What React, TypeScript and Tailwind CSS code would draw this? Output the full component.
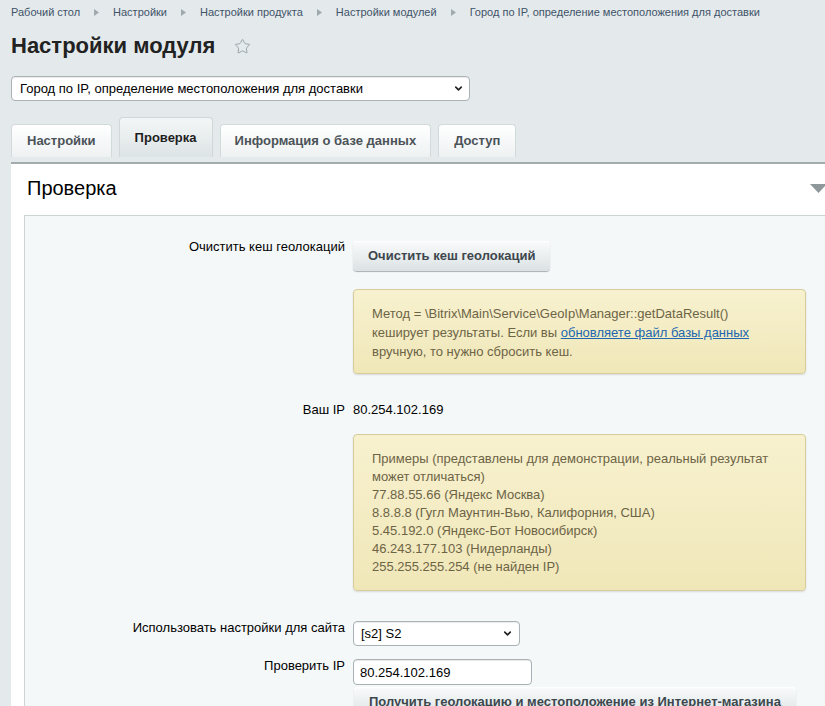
import React from "react";
import { Star, ChevronDown } from "lucide-react";

const crumbs = [
  "Рабочий стол",
  "Настройки",
  "Настройки продукта",
  "Настройки модулей",
  "Город по IP, определение местоположения для доставки",
];

const tabs = [
  { name: "Настройки", active: false, pad: "px-[15px]" },
  { name: "Проверка", active: true, pad: "px-[15px]" },
  { name: "Информация о базе данных", active: false, pad: "px-[14px]" },
  { name: "Доступ", active: false, pad: "px-[15px]" },
];

const examples = [
  "77.88.55.66 (Яндекс Москва)",
  "8.8.8.8 (Гугл Маунтин-Вью, Калифорния, США)",
  "5.45.192.0 (Яндекс-Бот Новосибирск)",
  "46.243.177.103 (Нидерланды)",
  "255.255.255.254 (не найден IP)",
];

const Row: React.FC<{ label?: string; className?: string; children: React.ReactNode }> = ({
  label,
  className = "",
  children,
}) => (
  <div className={`flex items-start ${className}`}>
    <div className="w-[320px] shrink-0 text-right text-[13px] leading-[16px] text-black">{label}</div>
    <div className="ml-[8px] flex-1">{children}</div>
  </div>
);

const AdmButton: React.FC<{ children: React.ReactNode; className?: string }> = ({ children, className = "" }) => (
  <button
    className={`h-[30px] rounded-[4px] bg-gradient-to-b from-[#fafbfb] to-[#dbe2e4] px-[15px] text-[13px] font-bold text-[#3d474d] shadow-[0_1px_1px_rgba(0,0,0,0.3),inset_0_1px_0_#ffffff] ${className}`}
  >
    {children}
  </button>
);

const Note: React.FC<{ children: React.ReactNode; className?: string }> = ({ children, className = "" }) => (
  <div
    className={`w-[453px] rounded-[4px] border border-[#d8cd9a] bg-gradient-to-b from-[#f7f1cf] to-[#f0e7b8] px-[18px] text-[13px] text-[#6d6446] shadow-[0_1px_2px_rgba(0,0,0,0.12)] ${className}`}
  >
    {children}
  </div>
);

export default function App() {
  return (
    <div className="h-[706px] overflow-hidden bg-[#e4eaec] font-['Liberation_Sans',Arial,sans-serif]">
      <div className="pl-[11px]">
        {/* Breadcrumbs */}
        <div className="flex items-center pt-[5px] text-[11px] leading-[14px] text-[#3f5268]">
          {crumbs.map((c, i) => (
            <React.Fragment key={c}>
              {i > 0 && (
                <svg width="5" height="7" viewBox="0 0 5 7" className="mx-[14px]">
                  <path d="M0 0 L5 3.5 L0 7 Z" fill="#9fa9ae" />
                </svg>
              )}
              <span>{c}</span>
            </React.Fragment>
          ))}
        </div>

        {/* Title */}
        <div className="mt-[14px] flex items-center">
          <h1 className="text-[22px] font-bold leading-[26px] text-[#222]">Настройки модуля</h1>
          <Star className="ml-[19px] mt-[1px]" size={17} strokeWidth={1.4} color="#98a2a6" />
        </div>

        {/* Module select */}
        <div className="relative mt-[17px] h-[25px] w-[459px]">
          <select className="h-full w-full appearance-none rounded-[4px] border border-[#a9b2b5] bg-white pl-[8px] text-[13px] text-black shadow-[inset_0_1px_1px_rgba(0,0,0,0.08)] outline-none">
            <option>Город по IP, определение местоположения для доставки</option>
          </select>
          <ChevronDown
            className="pointer-events-none absolute right-[6px] top-[7px]"
            size={11}
            strokeWidth={3.5}
            color="#222"
          />
        </div>

        {/* Tabs */}
        <div className="mt-[16px] flex items-end gap-[7px]">
          {tabs.map((t) =>
            t.active ? (
              <div
                key={t.name}
                className={`flex h-[40px] items-center rounded-t-[4px] border border-b-0 border-[#cfd7d9] bg-gradient-to-b from-[#f3f6f6] to-[#dde4e6] text-[13px] font-bold text-[#1e1e1e] ${t.pad}`}
              >
                {t.name}
              </div>
            ) : (
              <div
                key={t.name}
                className={`flex h-[33px] items-center rounded-t-[4px] border border-b-0 border-[#d3dadc] bg-gradient-to-b from-[#ffffff] to-[#eef1f2] text-[13px] font-bold text-[#4b5358] ${t.pad}`}
              >
                {t.name}
              </div>
            )
          )}
        </div>

        {/* Panel */}
        <div className="mt-[5px] w-[830px] border-t-2 border-[#a2abae] bg-white">
          <div className="flex items-center justify-between pl-[16px] pr-[14px] pt-[12px]">
            <div className="text-[20px] leading-[24px] text-black">Проверка</div>
            <svg width="17" height="9" viewBox="0 0 17 9">
              <path d="M0 0 L17 0 L8.5 9 Z" fill="#8e979a" />
            </svg>
          </div>

          <div className="ml-[13px] mt-[15px] h-[520px] border-l border-t border-[#cdd4d6] bg-[#f5f8f9] pt-[23px]">
            <Row label="Очистить кеш геолокаций">
              <AdmButton className="mt-[2px]">Очистить кеш геолокаций</AdmButton>
            </Row>

            <Row className="mt-[18px]">
              <Note className="pb-[12px] pt-[14px] leading-[19px]">
                Метод = \Bitrix\Main\Service\GeoIp\Manager::getDataResult()
                <br />
                кеширует результаты. Если вы{" "}
                <a href="#" className="text-[#2067b0] underline">
                  обновляете файл базы данных
                </a>
                <br />
                вручную, то нужно сбросить кеш.
              </Note>
            </Row>

            <Row label="Ваш IP" className="mt-[28px]">
              <div className="text-[13px] leading-[16px] text-black">80.254.102.169</div>
            </Row>

            <Row className="mt-[16px]">
              <Note className="pb-[14px] pt-[15px] leading-[18px]">
                <div>Примеры (представлены для демонстрации, реальный результат</div>
                <div>может отличаться)</div>
                {examples.map((e) => (
                  <div key={e}>{e}</div>
                ))}
              </Note>
            </Row>

            <Row label="Использовать настройки для сайта" className="mt-[29px]">
              <div className="relative mt-[1px] h-[25px] w-[167px]">
                <select className="h-full w-full appearance-none rounded-[4px] border border-[#a9b2b5] bg-white pl-[7px] text-[13px] text-black shadow-[inset_0_1px_1px_rgba(0,0,0,0.08)] outline-none">
                  <option>[s2] S2</option>
                </select>
                <ChevronDown
                  className="pointer-events-none absolute right-[7px] top-[7px]"
                  size={11}
                  strokeWidth={3.5}
                  color="#222"
                />
              </div>
            </Row>

            <Row label="Проверить IP" className="mt-[12px]">
              <input
                defaultValue="80.254.102.169"
                className="mt-[1px] h-[26px] w-[179px] rounded-[4px] border border-[#a9b2b5] bg-white px-[6px] text-[13px] text-black shadow-[inset_0_1px_1px_rgba(0,0,0,0.1)] outline-none"
              />
            </Row>

            <Row className="mt-[2px]">
              <AdmButton className="ml-[1px]">Получить геолокацию и местоположение из Интернет-магазина</AdmButton>
            </Row>
          </div>
        </div>
      </div>
    </div>
  );
}
